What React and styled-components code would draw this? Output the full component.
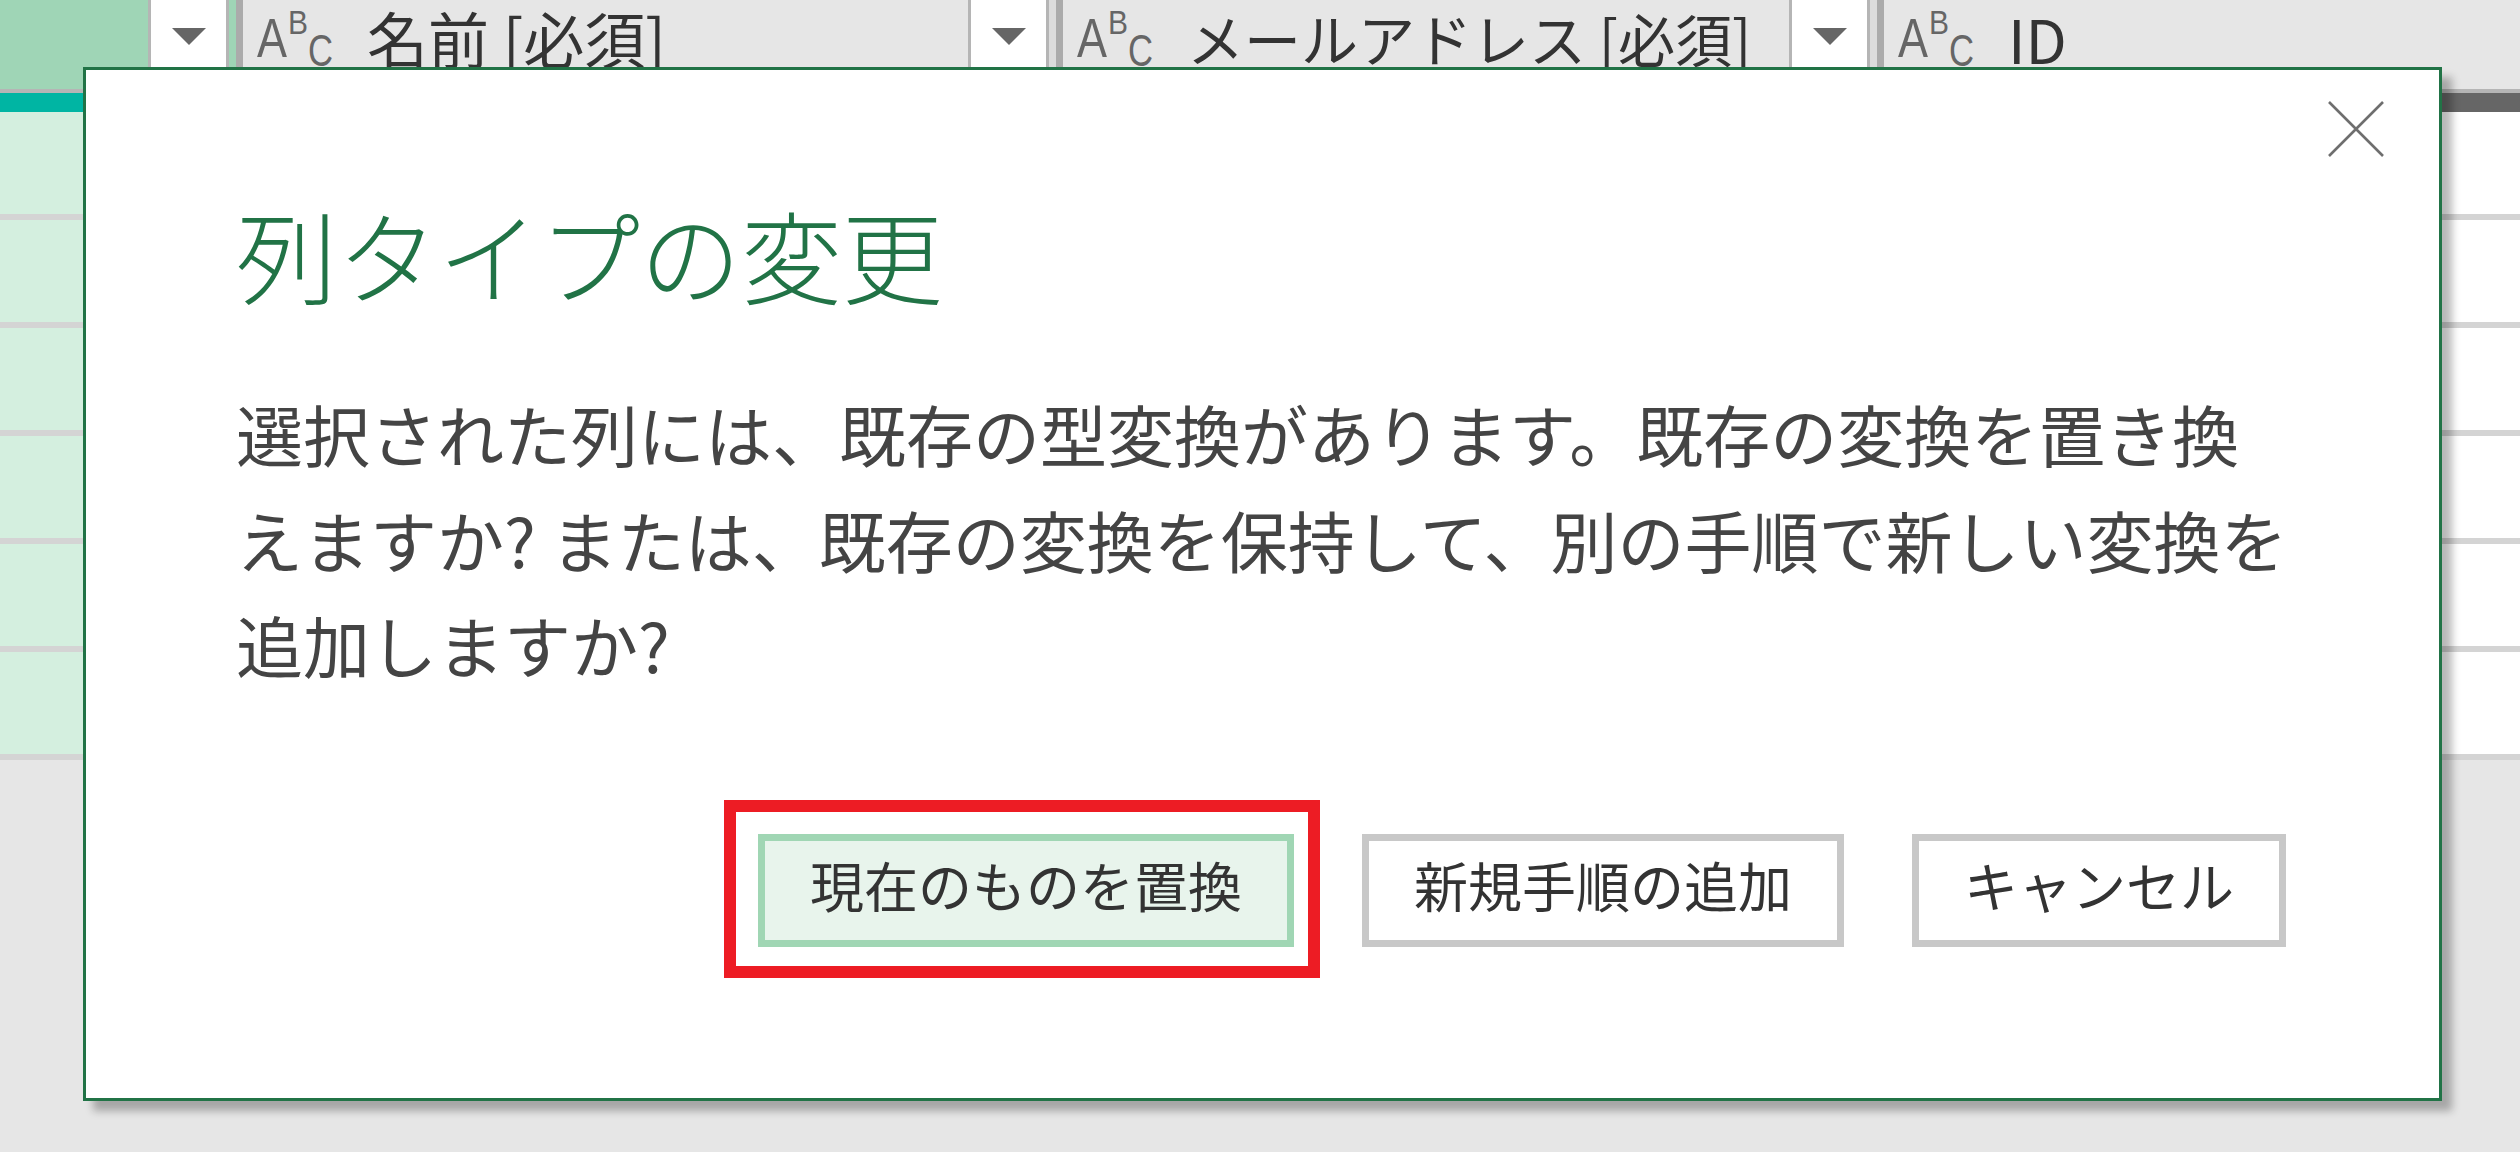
import React from 'react';
import styled, { createGlobalStyle } from 'styled-components';

const GlobalStyle = createGlobalStyle`
  html, body {
    margin: 0;
    padding: 0;
  }
  body {
    width: 2520px;
    height: 1152px;
    overflow: hidden;
    background: #e6e6e6;
    font-family: "Noto Sans CJK JP", "Noto Sans", sans-serif;
  }
`;

const Page = styled.div`
  position: relative;
  width: 2520px;
  height: 1152px;
  overflow: hidden;
  background: #e6e6e6;
`;

const Grid = styled.div`
  display: flex;
  align-items: flex-start;
`;

const Column = styled.div`
  display: flex;
  flex-direction: column;
  flex: 0 0 ${p => p.$width}px;
`;

const Header = styled.div`
  display: flex;
  height: 93px;
  box-sizing: border-box;
  border-bottom: 4px solid #b5b5b5;
  background: ${p => (p.$selected ? '#9fd5b6' : '#e6e6e6')};
`;

const HeaderMain = styled.div`
  flex: 1;
  min-width: 0;
  display: flex;
  align-items: center;
  gap: 34px;
  padding: 0 0 14px 14px;
`;

const HeaderLabel = styled.span`
  font-size: ${p => p.$size || 60}px;
  line-height: 1;
  color: #333;
  white-space: nowrap;
`;

const DropCell = styled.div`
  flex: 0 0 75px;
  display: flex;
  align-items: center;
  justify-content: center;
  padding-bottom: 16px;
  background: #fff;
  border-left: 3px solid #b5b5b5;
  border-right: 3px solid #b5b5b5;
`;

const Arrow = styled.span`
  width: 0;
  height: 0;
  border-left: 17px solid transparent;
  border-right: 17px solid transparent;
  border-top: 17px solid #666;
`;

const Stripe = styled.div`
  flex: 0 0 7px;
  background: ${p => (p.$selected ? '#9fd5b6' : '#dcdcdc')};
`;

const Divider = styled.div`
  flex: 0 0 7px;
  background: #ababab;
`;

const QualityBar = styled.div`
  height: 19px;
  background: ${p => p.$color};
`;

const Cell = styled.div`
  height: 108px;
  box-sizing: border-box;
  border-bottom: 6px solid #d4d4d4;
  background: ${p => (p.$selected ? '#d4efdf' : '#fff')};
`;

const Dialog = styled.div`
  position: absolute;
  left: 83px;
  top: 67px;
  width: 2359px;
  box-sizing: border-box;
  background: #fff;
  border: 3px solid #217346;
  box-shadow: 10px 10px 8px rgba(0, 0, 0, 0.28);
`;

const CloseRow = styled.div`
  display: flex;
  justify-content: flex-end;
  padding: 30px 54px 0 0;
`;

const CloseButton = styled.button`
  width: 58px;
  height: 58px;
  padding: 0;
  border: none;
  background: transparent;
  display: block;
`;

const Content = styled.div`
  padding: 35px 153px 151px 150px;
`;

const Title = styled.h1`
  margin: 0;
  font-size: 101px;
  font-weight: 300;
  line-height: 120px;
  color: #217346;
`;

const Message = styled.p`
  margin: 67px 0 0;
  font-size: 67px;
  line-height: 105.6px;
  color: #444;
  white-space: nowrap;
`;

const ButtonRow = styled.div`
  display: flex;
  justify-content: flex-end;
  gap: 68px;
  margin-top: 137px;
`;

const Highlight = styled.span`
  position: relative;
  display: flex;

  &::after {
    content: '';
    position: absolute;
    top: -34px;
    left: -34px;
    right: -26px;
    bottom: -31px;
    border: 12px solid #ed1c24;
    pointer-events: none;
  }
`;

const Button = styled.button`
  height: 113px;
  box-sizing: border-box;
  padding: 0 45px 12px;
  border: 7px solid ${p => (p.$primary ? '#a0d6b4' : '#c8c8c8')};
  background: ${p => (p.$primary ? '#e8f4ec' : '#fff')};
  font-family: "Noto Sans CJK JP", sans-serif;
  font-size: 54px;
  line-height: 87px;
  color: #333;
  white-space: nowrap;
`;

function AbcIcon() {
  return (
    <svg width="76" height="58" viewBox="0 0 76 58" fill="#666"
      fontFamily="'Liberation Sans', sans-serif">
      <text x="0" y="48" fontSize="56" textLength="30" lengthAdjust="spacingAndGlyphs">A</text>
      <text x="31" y="25" fontSize="34" textLength="20" lengthAdjust="spacingAndGlyphs">B</text>
      <text x="51" y="57" fontSize="44" textLength="25" lengthAdjust="spacingAndGlyphs">C</text>
    </svg>
  );
}

function CloseIcon() {
  return (
    <svg width="58" height="58" viewBox="0 0 58 58">
      <path d="M2 2 L56 56 M56 2 L2 56" stroke="#6e6e6e" strokeWidth="2.6" />
    </svg>
  );
}

const columns = [
  { width: 243, selected: true, bar: '#00b5a3' },
  { width: 820, label: '名前 [必須]', size: 61, bar: '#00b5a3' },
  { width: 821, label: 'メールアドレス [必須]', size: 57, bar: '#00b5a3' },
  { width: 900, label: 'ID', size: 60, bar: '#666666' },
];

const rowCount = 6;

export default function App() {
  return (
    <Page>
      <GlobalStyle />
      <Grid>
        {columns.map((col, i) => (
          <Column key={i} $width={col.width}>
            <Header $selected={col.selected}>
              <HeaderMain>
                {col.label && <AbcIcon />}
                {col.label && <HeaderLabel $size={col.size}>{col.label}</HeaderLabel>}
              </HeaderMain>
              <DropCell>
                <Arrow />
              </DropCell>
              <Stripe $selected={col.selected} />
              <Divider />
            </Header>
            <QualityBar $color={col.bar} />
            {Array.from({ length: rowCount }).map((_, r) => (
              <Cell key={r} $selected={col.selected} />
            ))}
          </Column>
        ))}
      </Grid>

      <Dialog>
        <CloseRow>
          <CloseButton aria-label="閉じる">
            <CloseIcon />
          </CloseButton>
        </CloseRow>
        <Content>
          <Title>列タイプの変更</Title>
          <Message>
            選択された列には、既存の型変換があります。既存の変換を置き換
            <br />
            えますか? または、既存の変換を保持して、別の手順で新しい変換を
            <br />
            追加しますか?
          </Message>
          <ButtonRow>
            <Highlight>
              <Button $primary>現在のものを置換</Button>
            </Highlight>
            <Button>新規手順の追加</Button>
            <Button>キャンセル</Button>
          </ButtonRow>
        </Content>
      </Dialog>
    </Page>
  );
}
